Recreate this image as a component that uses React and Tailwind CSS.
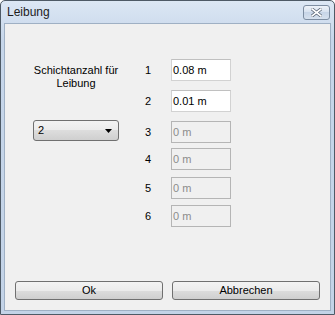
import React from 'react';

const font = { fontFamily: '"Liberation Sans", Arial, sans-serif' };

const rows = [
  { n: '1', value: '0.08 m', enabled: true, gap: 'mt-0' },
  { n: '2', value: '0.01 m', enabled: true, gap: 'mt-[9px]' },
  { n: '3', value: '0 m', enabled: false, gap: 'mt-[9px]' },
  { n: '4', value: '0 m', enabled: false, gap: 'mt-[5px]' },
  { n: '5', value: '0 m', enabled: false, gap: 'mt-[7px]' },
  { n: '6', value: '0 m', enabled: false, gap: 'mt-[6px]' },
];

function WinButton({ children, className = '' }) {
  return (
    <div
      className={
        'flex items-center justify-center rounded-[3px] border border-[#707070] bg-[linear-gradient(#f3f3f3_0%,#ebebeb_50%,#dddddd_50%,#cfcfcf_100%)] text-[11px] text-black ' +
        className
      }
    >
      {children}
    </div>
  );
}

function Field({ value, enabled }) {
  return (
    <div
      className={
        enabled
          ? 'flex h-[22px] w-[60px] items-center border border-[#d2d2d2] border-t-[#c0c0c0] bg-white pl-[1px] text-[11px] text-black'
          : 'flex h-[22px] w-[60px] items-center border border-[#b5b5b5] bg-[#f0f0f0] pl-[1px] text-[11px] text-[#8c8c8c]'
      }
    >
      {value}
    </div>
  );
}

export default function App() {
  return (
    <div style={font} className="h-[315px] w-[335px] bg-white">
      <div className="flex h-full w-full flex-col rounded-t-[5px] border border-[#4e5a66] bg-[linear-gradient(#dce7f4,#c6d6ea_40px,#c3d3e7)]">
        {/* Title bar */}
        <div className="flex h-[22px] shrink-0 items-start justify-between pl-[6px] pr-[4px]">
          <span className="mt-[4px] text-[12px] leading-[14px] text-[#1c1c1c]">Leibung</span>
          <div className="mt-[4px] flex h-[15px] w-[27px] items-center justify-center rounded-[3px] border border-[#7d8da1] bg-[linear-gradient(#eef3f9,#d5e0ee_50%,#c7d5e7_50%,#d6e1ee)]">
            <svg width="11" height="9" viewBox="0 0 11 9">
              <path
                d="M1 1 L10 8 M10 1 L1 8"
                stroke="#5a6676"
                strokeWidth="3.2"
                strokeLinecap="square"
              />
              <path
                d="M1 1 L10 8 M10 1 L1 8"
                stroke="#ffffff"
                strokeWidth="1.6"
                strokeLinecap="square"
              />
            </svg>
          </div>
        </div>

        {/* Client area */}
        <div className="flex flex-1 px-[3px] pb-[3px]">
          <div className="flex flex-1 flex-col border border-[#9fb0c4] bg-[#f0f0f0]">
            <div className="flex flex-1 items-start">
              {/* Left column */}
              <div className="ml-[28px] mt-[40px] flex w-[86px] flex-col items-center">
                <div className="text-center text-[11px] leading-[13px] text-black">
                  Schichtanzahl für
                  <br />
                  Leibung
                </div>
                <div className="mt-[30px] flex h-[21px] w-[86px] items-center justify-between rounded-[3px] border border-[#707070] bg-[linear-gradient(#f3f3f3_0%,#ebebeb_50%,#dddddd_50%,#cfcfcf_100%)] pl-[4px] pr-[6px] text-[11px] text-black">
                  <span>2</span>
                  <svg width="7" height="4" viewBox="0 0 7 4">
                    <path d="M0 0 H7 L3.5 4 Z" fill="#000" />
                  </svg>
                </div>
              </div>

              {/* Right column */}
              <div className="ml-[26px] mt-[35px] flex flex-col">
                {rows.map((r) => (
                  <div key={r.n} className={'flex items-center ' + r.gap}>
                    <span className="w-[26px] text-[11px] text-black">{r.n}</span>
                    <Field value={r.value} enabled={r.enabled} />
                  </div>
                ))}
              </div>
            </div>

            {/* Buttons */}
            <div className="mb-[10px] flex gap-[9px] px-[10px]">
              <WinButton className="h-[19px] w-[148px]">Ok</WinButton>
              <WinButton className="h-[19px] w-[148px]">Abbrechen</WinButton>
            </div>
          </div>
        </div>
      </div>
    </div>
  );
}
